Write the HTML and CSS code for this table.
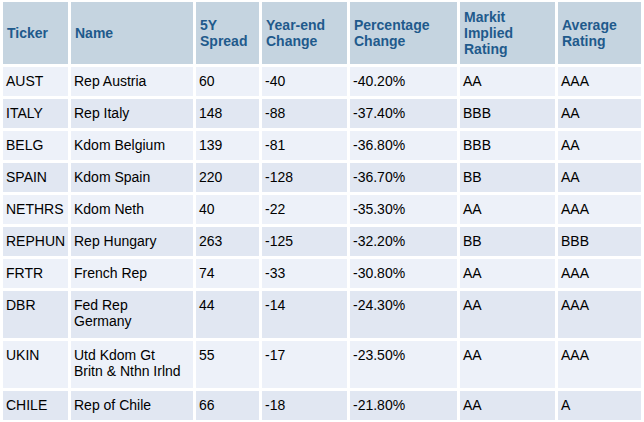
FILE: index.html
```html
<!DOCTYPE html>
<html>
<head>
<meta charset="utf-8">
<link rel="stylesheet" href="styles.css">
</head>
<body>
<table class="grid">
  <colgroup>
    <col class="c-ticker"><col class="c-name"><col class="c-spread"><col class="c-ye"><col class="c-pct"><col class="c-markit"><col class="c-avg">
  </colgroup>
  <thead>
    <tr>
      <th>Ticker</th><th>Name</th><th>5Y Spread</th><th>Year-end Change</th><th>Percentage Change</th><th>Markit Implied Rating</th><th>Average Rating</th>
    </tr>
  </thead>
  <tbody>
    <tr><td>AUST</td><td>Rep Austria</td><td>60</td><td>-40</td><td>-40.20%</td><td>AA</td><td>AAA</td></tr>
    <tr><td>ITALY</td><td>Rep Italy</td><td>148</td><td>-88</td><td>-37.40%</td><td>BBB</td><td>AA</td></tr>
    <tr><td>BELG</td><td>Kdom Belgium</td><td>139</td><td>-81</td><td>-36.80%</td><td>BBB</td><td>AA</td></tr>
    <tr><td>SPAIN</td><td>Kdom Spain</td><td>220</td><td>-128</td><td>-36.70%</td><td>BB</td><td>AA</td></tr>
    <tr><td>NETHRS</td><td>Kdom Neth</td><td>40</td><td>-22</td><td>-35.30%</td><td>AA</td><td>AAA</td></tr>
    <tr><td>REPHUN</td><td>Rep Hungary</td><td>263</td><td>-125</td><td>-32.20%</td><td>BB</td><td>BBB</td></tr>
    <tr><td>FRTR</td><td>French Rep</td><td>74</td><td>-33</td><td>-30.80%</td><td>AA</td><td>AAA</td></tr>
    <tr class="tall"><td>DBR</td><td>Fed Rep Germany</td><td>44</td><td>-14</td><td>-24.30%</td><td>AA</td><td>AAA</td></tr>
    <tr class="tall"><td>UKIN</td><td>Utd Kdom Gt Britn &amp; Nthn Irlnd</td><td>55</td><td>-17</td><td>-23.50%</td><td>AA</td><td>AAA</td></tr>
    <tr><td>CHILE</td><td>Rep of Chile</td><td>66</td><td>-18</td><td>-21.80%</td><td>AA</td><td>A</td></tr>
  </tbody>
</table>
</body>
</html>
```

FILE: styles.css
```css
html, body {
  margin: 0;
  padding: 0;
  background: #ffffff;
}

.grid {
  width: 644px;
  table-layout: fixed;
  border-collapse: separate;
  border-spacing: 3px;
  margin-top: -1px;
  font-family: "Liberation Sans", Arial, sans-serif;
  font-size: 14px;
  line-height: 16px;
  color: #000000;
}

.c-ticker { width: 65px; }
.c-name { width: 122px; }
.c-spread { width: 63px; }
.c-ye { width: 85px; }
.c-pct { width: 107px; }
.c-markit { width: 95px; }
.c-avg { width: 83px; }

.grid th {
  background: #c5d4e0;
  color: #1f5a8c;
  font-weight: bold;
  text-align: left;
  vertical-align: middle;
  height: 62px;
  padding: 0 8px 0 4px;
  box-sizing: border-box;
}

.grid td {
  text-align: left;
  vertical-align: top;
  padding: 6px 8px 7px 3px;
}

.grid tbody tr:nth-child(odd) td {
  background: #edf1f9;
}

.grid tbody tr:nth-child(even) td {
  background: #e1e7f2;
}

.grid tbody tr.tall td {
  padding-bottom: 9px;
}
```
